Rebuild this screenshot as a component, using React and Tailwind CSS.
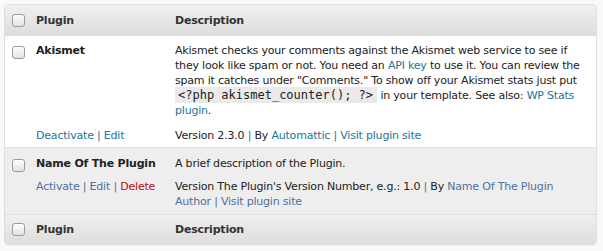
import React from "react";

const font = { fontFamily: "'DejaVu Sans', 'Lucida Grande', Verdana, sans-serif" };

function Check() {
  return (
    <span className="inline-block w-[13px] h-[13px] rounded-[3px] border border-[#9a9a9a] bg-gradient-to-b from-white to-[#e2e2e2] shadow-[inset_0_1px_0_#fff] align-middle" />
  );
}

function HeadRow({ pos }) {
  const edge =
    pos === "top"
      ? "h-[31px] rounded-t-[4px] border-b border-[#dcdcdc]"
      : "h-[30px] rounded-b-[4px] border-t border-[#dcdcdc]";
  return (
    <div
      className={`flex items-center bg-gradient-to-b from-[#f0f0f0] to-[#dddddd] font-bold text-[#333] ${edge}`}
    >
      <div className="w-[31px] pl-[7px] flex items-center">
        <Check />
      </div>
      <div className="w-[139px]">Plugin</div>
      <div>Description</div>
    </div>
  );
}

export default function App() {
  return (
    <div
      className="w-[603px] h-[251px] bg-[#f9f9f9] pt-[4px] pl-[4px] text-[11px] leading-[15px] text-[#333] tracking-[-0.2px]"
      style={font}
    >
      <div className="w-[593px] border border-[#dfdfdf] rounded-[4px] shadow-[0_1px_1px_rgba(0,0,0,0.04)]">
        <HeadRow pos="top" />

        {/* Akismet, active */}
        <div className="bg-white border-b border-[#dfdfdf] pt-[7px] pb-[4px]">
          <div className="flex">
            <div className="w-[31px] pl-[7px] pt-[1px]">
              <Check />
            </div>
            <div className="w-[139px] font-bold text-[#222]">Akismet</div>
            <div className="w-[412px] text-[#222]">
              Akismet checks your comments against the Akismet web service to see if they look like spam or not. You need an{" "}
              <span className="text-[#21759b]">API key</span> to use it. You can review the spam it catches under "Comments." To show off your Akismet stats just put{" "}
              <code
                className="whitespace-nowrap bg-[#eaeaea] pl-[3px] pr-[4px] py-[1px] text-[12px] leading-[13px] tracking-normal text-[#222]"
                style={{ fontFamily: "'DejaVu Sans Mono', 'Liberation Mono', monospace" }}
              >
                &lt;?php akismet_counter(); ?&gt;
              </code>{" "}
              in your template. See also: <span className="text-[#21759b]">WP Stats plugin</span>.
            </div>
          </div>
          <div className="flex mt-[10px]">
            <div className="w-[31px]" />
            <div className="w-[139px] text-[#21759b]">Deactivate | Edit</div>
            <div className="text-[#222]">
              Version 2.3.0 <span className="text-[#21759b]">|</span> By{" "}
              <span className="text-[#21759b]">Automattic | Visit plugin site</span>
            </div>
          </div>
        </div>

        {/* inactive plugin */}
        <div className="bg-[#eeeeee] pt-[8px] pb-[5px]">
          <div className="flex">
            <div className="w-[31px] pl-[7px] pt-[1px]">
              <Check />
            </div>
            <div className="w-[139px] font-bold text-[#222]">Name Of The Plugin</div>
            <div className="text-[#222]">A brief description of the Plugin.</div>
          </div>
          <div className="flex mt-[7px]">
            <div className="w-[31px]" />
            <div className="w-[139px] text-[#50709e]">
              Activate | Edit | <span className="text-[#bc0b0b]">Delete</span>
            </div>
            <div className="w-[412px] text-[#222]">
              Version The Plugin's Version Number, e.g.: 1.0 <span className="text-[#50709e]">|</span> By{" "}
              <span className="text-[#50709e]">Name Of The Plugin Author | Visit plugin site</span>
            </div>
          </div>
        </div>

        <HeadRow pos="bottom" />
      </div>
    </div>
  );
}
